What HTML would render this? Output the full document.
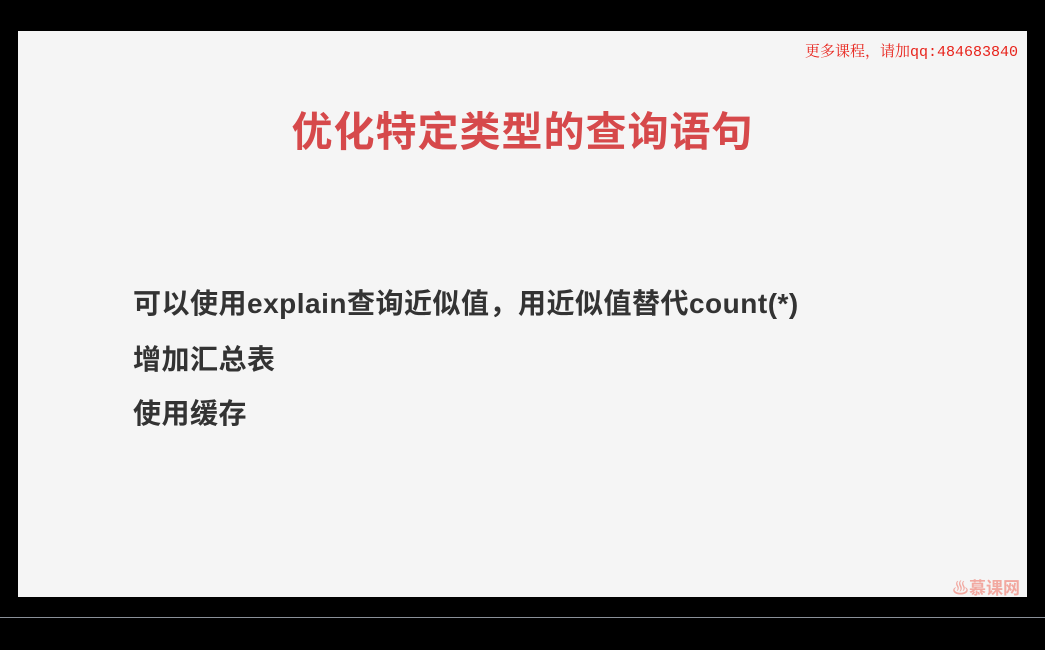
<!DOCTYPE html>
<html><head><meta charset="utf-8"><style>
body{margin:0;width:1045px;height:650px;background:#000;position:relative;overflow:hidden;font-family:"Liberation Sans","Noto Sans CJK SC",sans-serif}
.slide{position:absolute;left:18px;top:31px;width:1009px;height:566px;background:#f5f5f5}
.wm{position:absolute;left:805px;top:40px;color:#e8231b;font:15px "Liberation Mono","Noto Serif CJK SC",serif;white-space:nowrap}
.title{position:absolute;left:0;width:1045px;top:98px;text-align:center;color:#d6494b;font-size:41px;font-weight:bold;letter-spacing:1px}
.t{position:absolute;left:133px;color:#333;font-size:28px;font-weight:bold;white-space:nowrap;letter-spacing:0.5px}
.logo{position:absolute;left:952px;top:574px;color:#f2a8a0;font-size:17px;font-weight:bold}
.line{position:absolute;left:0;top:617px;width:1045px;height:1px;background:#8a9099}
</style></head><body>
<div class="slide"></div>
<div class="wm">更多课程，请加qq:484683840</div>
<div class="title">优化特定类型的查询语句</div>
<div class="t" style="top:282px">可以使用explain查询近似值，用近似值替代count(*)</div>
<div class="t" style="top:338px">增加汇总表</div>
<div class="t" style="top:392px">使用缓存</div>
<div class="logo">♨慕课网</div>
<div class="line"></div>
</body></html>
